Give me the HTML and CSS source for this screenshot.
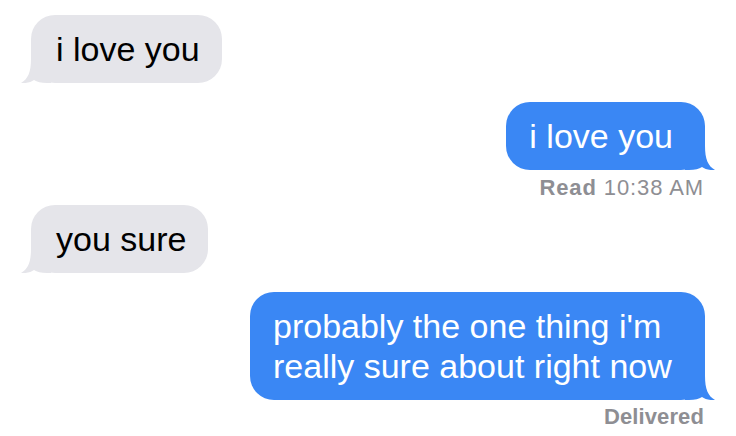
FILE: index.html
```html
<!DOCTYPE html>
<html lang="en">
<head>
<meta charset="utf-8">
<title>Messages</title>
<link rel="stylesheet" href="styles.css">
</head>
<body>
<div class="thread">
  <div class="bubble in">i love you<svg class="tail" viewBox="0 0 30 24" aria-hidden="true"><path d="M20 0 C20 13 23 20 30 24 C24 24.5 20 23 17 21 C14 23 10 24 4 24 L0 24 L0 0 Z"/></svg></div>
  <div class="bubble out gap">i love you<svg class="tail" viewBox="0 0 30 24" aria-hidden="true"><path d="M20 0 C20 13 23 20 30 24 C24 24.5 20 23 17 21 C14 23 10 24 4 24 L0 24 L0 0 Z"/></svg></div>
  <div class="status read"><b>Read</b> 10:38 AM</div>
  <div class="bubble in after-status">you sure<svg class="tail" viewBox="0 0 30 24" aria-hidden="true"><path d="M20 0 C20 13 23 20 30 24 C24 24.5 20 23 17 21 C14 23 10 24 4 24 L0 24 L0 0 Z"/></svg></div>
  <div class="bubble out gap">probably the one thing i'm really sure about right now<svg class="tail" viewBox="0 0 30 24" aria-hidden="true"><path d="M20 0 C20 13 23 20 30 24 C24 24.5 20 23 17 21 C14 23 10 24 4 24 L0 24 L0 0 Z"/></svg></div>
  <div class="status delivered"><b>Delivered</b></div>
</div>
</body>
</html>
```
FILE: styles.css
```css
html, body {
  margin: 0;
  padding: 0;
  background: #ffffff;
}

.thread {
  display: flex;
  flex-direction: column;
  padding: 15px 31px 0 31px;
  font-family: "Liberation Sans", Arial, sans-serif;
}

.bubble {
  position: relative;
  font-size: 34px;
  line-height: 40px;
  border-radius: 24px;
  max-width: 400px;
}

.bubble.in {
  align-self: flex-start;
  background: #e5e5ea;
  color: #000000;
  padding: 14px 22px 14px 25px;
}

.bubble.out {
  align-self: flex-end;
  background: #3a87f4;
  color: #ffffff;
  padding: 14px 32px 14px 23px;
}

.bubble.gap {
  margin-top: 19px;
}

.bubble.after-status {
  margin-top: 4px;
}

.tail {
  position: absolute;
  bottom: 0;
  width: 30px;
  height: 24px;
}

.bubble.out .tail {
  right: -10px;
  fill: #3a87f4;
}

.bubble.in .tail {
  left: -10px;
  fill: #e5e5ea;
  transform: scaleX(-1);
}

.status {
  align-self: flex-end;
  font-size: 22px;
  line-height: 26px;
  color: #8e8e93;
  margin-right: 1px;
}

.status b {
  font-weight: 700;
}

.status.read {
  margin-top: 5px;
  letter-spacing: 0.9px;
}

.status.delivered {
  margin-top: 4px;
  letter-spacing: 0.1px;
}
```
